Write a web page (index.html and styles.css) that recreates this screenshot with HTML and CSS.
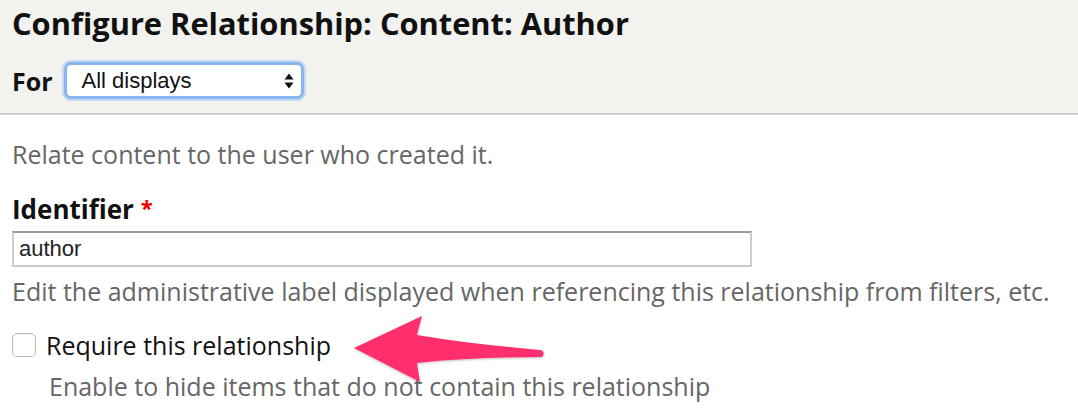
FILE: index.html
```html
<!DOCTYPE html>
<html>
<head>
<meta charset="utf-8">
<link rel="stylesheet" href="styles.css">
</head>
<body>
<div class="header">
  <h1 class="title">Configure Relationship: Content: Author</h1>
  <div class="for-row">
    <span class="for-label">For</span>
    <div class="select">
      <span class="select-text">All displays</span>
      <svg class="select-arrows" width="10" height="18" viewBox="0 0 10 18"><path d="M5 1.5 L9.5 7.5 L0.5 7.5 Z M5 16.5 L9.5 10.5 L0.5 10.5 Z" fill="#111"/></svg>
    </div>
  </div>
</div>
<div class="body">
  <p class="desc intro">Relate content to the user who created it.</p>
  <div class="field">
    <label class="label">Identifier <span class="req">*</span></label>
    <div class="input">author</div>
    <p class="desc hint">Edit the administrative label displayed when referencing this relationship from filters, etc.</p>
  </div>
  <div class="check-row">
    <span class="checkbox"></span>
    <span class="check-label">Require this relationship</span>
  </div>
  <p class="desc check-desc">Enable to hide items that do not contain this relationship</p>
  <svg class="arrow" width="200" height="80" viewBox="345 310 200 80">
    <defs>
      <filter id="sh" x="-10%" y="-10%" width="120%" height="130%">
        <feDropShadow dx="0" dy="1" stdDeviation="1" flood-color="#000" flood-opacity="0.25"/>
      </filter>
    </defs>
    <path filter="url(#sh)" fill="#ff2f6d" d="M354 348 L422 316 L417 335 Q470 344 540 350 A3.5 3.5 0 0 1 540 357 Q470 357 417 363 L420 382 Z"/>
  </svg>
</div>
</body>
</html>
```
FILE: styles.css
```css
html, body {
  margin: 0;
  padding: 0;
  background: #fff;
  font-family: "Open Sans", "DejaVu Sans", sans-serif;
}
body {
  position: relative;
  width: 1078px;
  height: 418px;
  overflow: hidden;
}
.header {
  background: #f2f2ee;
  border-bottom: 2px solid #cfcfcb;
  height: 115px;
  box-sizing: border-box;
  padding: 4px 12px 0;
}
.title {
  margin: 0;
  font-size: 30.8px;
  font-weight: 700;
  line-height: 38px;
  color: #111;
}
.for-row {
  display: flex;
  align-items: center;
  margin-top: 20px;
  gap: 11px;
}
.for-label {
  font-size: 25px;
  font-weight: 700;
  line-height: 30px;
  color: #111;
}
.select {
  width: 240px;
  height: 37px;
  background: #fff;
  border: 3px solid #86b7f1;
  border-radius: 7px;
  box-shadow: 0 0 0 2px rgba(150,192,242,0.5);
  display: flex;
  align-items: center;
  justify-content: space-between;
  padding: 0 7px 0 15px;
  box-sizing: border-box;
}
.select-text {
  font-family: "Liberation Sans", Arial, sans-serif;
  font-size: 22px;
  color: #111;
}
.select-arrows { display: block; }
.body {
  padding: 0 12px;
}
.desc {
  margin: 0;
  color: #666;
  font-size: 25px;
  line-height: 30px;
}
.intro {
  padding-top: 24px;
}
.field {
  margin-top: 23px;
}
.label {
  display: block;
  font-size: 26px;
  font-weight: 700;
  color: #111;
  line-height: 30px;
}
.req {
  color: #e00;
  font-size: 22px;
  vertical-align: 3px;
}
.input {
  margin-top: 7px;
  width: 740px;
  height: 36px;
  box-sizing: border-box;
  border: 2px solid #ccc;
  border-top-color: #999;
  padding: 0 5px;
  font-family: "Liberation Sans", Arial, sans-serif;
  font-size: 22px;
  line-height: 32px;
  color: #222;
}
.hint {
  margin-top: 9px;
}
.check-row {
  display: flex;
  align-items: center;
  margin-top: 24px;
  gap: 10px;
}
.checkbox {
  width: 24px;
  height: 24px;
  box-sizing: border-box;
  border: 1px solid #bbb;
  border-radius: 5px;
  background: #fff;
  box-shadow: inset 0 1px 1px rgba(0,0,0,0.06);
}
.check-label {
  font-size: 25px;
  color: #111;
  line-height: 30px;
}
.check-desc {
  margin-top: 11px;
  padding-left: 37px;
}
.arrow {
  position: absolute;
  left: 345px;
  top: 310px;
}
```
